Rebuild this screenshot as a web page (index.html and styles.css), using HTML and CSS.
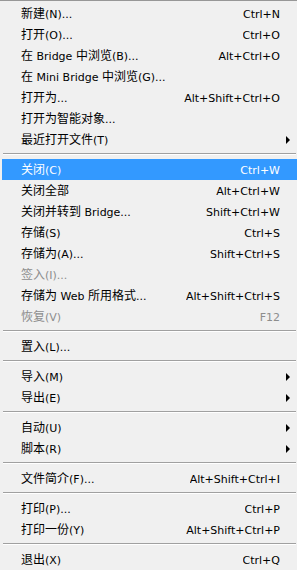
FILE: index.html
```html
<!DOCTYPE html>
<html>
<head>
<meta charset="utf-8">
<link rel="stylesheet" href="styles.css">
</head>
<body>
<div class="menu">
  <div class="item"><span class="label"><span class="z">新建</span>(N)...</span><span class="key">Ctrl+N</span><span class="sub"></span></div>
  <div class="item"><span class="label"><span class="z">打开</span>(O)...</span><span class="key">Ctrl+O</span><span class="sub"></span></div>
  <div class="item"><span class="label"><span class="z">在</span> Bridge <span class="z">中浏览</span>(B)...</span><span class="key">Alt+Ctrl+O</span><span class="sub"></span></div>
  <div class="item"><span class="label"><span class="z">在</span> Mini Bridge <span class="z">中浏览</span>(G)...</span><span class="key"></span><span class="sub"></span></div>
  <div class="item"><span class="label"><span class="z">打开为</span>...</span><span class="key">Alt+Shift+Ctrl+O</span><span class="sub"></span></div>
  <div class="item"><span class="label"><span class="z">打开为智能对象</span>...</span><span class="key"></span><span class="sub"></span></div>
  <div class="item"><span class="label"><span class="z">最近打开文件</span>(T)</span><span class="key"></span><span class="sub"><i class="arrow"></i></span></div>
  <div class="sep"></div>
  <div class="item active"><span class="label"><span class="z">关闭</span>(C)</span><span class="key">Ctrl+W</span><span class="sub"></span></div>
  <div class="item"><span class="label"><span class="z">关闭全部</span></span><span class="key">Alt+Ctrl+W</span><span class="sub"></span></div>
  <div class="item"><span class="label"><span class="z">关闭并转到</span> Bridge...</span><span class="key">Shift+Ctrl+W</span><span class="sub"></span></div>
  <div class="item"><span class="label"><span class="z">存储</span>(S)</span><span class="key">Ctrl+S</span><span class="sub"></span></div>
  <div class="item"><span class="label"><span class="z">存储为</span>(A)...</span><span class="key">Shift+Ctrl+S</span><span class="sub"></span></div>
  <div class="item disabled"><span class="label"><span class="z">签入</span>(I)...</span><span class="key"></span><span class="sub"></span></div>
  <div class="item"><span class="label"><span class="z">存储为</span> Web <span class="z">所用格式</span>...</span><span class="key">Alt+Shift+Ctrl+S</span><span class="sub"></span></div>
  <div class="item disabled"><span class="label"><span class="z">恢复</span>(V)</span><span class="key">F12</span><span class="sub"></span></div>
  <div class="sep"></div>
  <div class="item"><span class="label"><span class="z">置入</span>(L)...</span><span class="key"></span><span class="sub"></span></div>
  <div class="sep"></div>
  <div class="item"><span class="label"><span class="z">导入</span>(M)</span><span class="key"></span><span class="sub"><i class="arrow"></i></span></div>
  <div class="item"><span class="label"><span class="z">导出</span>(E)</span><span class="key"></span><span class="sub"><i class="arrow"></i></span></div>
  <div class="sep"></div>
  <div class="item"><span class="label"><span class="z">自动</span>(U)</span><span class="key"></span><span class="sub"><i class="arrow"></i></span></div>
  <div class="item"><span class="label"><span class="z">脚本</span>(R)</span><span class="key"></span><span class="sub"><i class="arrow"></i></span></div>
  <div class="sep"></div>
  <div class="item"><span class="label"><span class="z">文件简介</span>(F)...</span><span class="key">Alt+Shift+Ctrl+I</span><span class="sub"></span></div>
  <div class="sep"></div>
  <div class="item"><span class="label"><span class="z">打印</span>(P)...</span><span class="key">Ctrl+P</span><span class="sub"></span></div>
  <div class="item"><span class="label"><span class="z">打印一份</span>(Y)</span><span class="key">Alt+Shift+Ctrl+P</span><span class="sub"></span></div>
  <div class="sep"></div>
  <div class="item"><span class="label"><span class="z">退出</span>(X)</span><span class="key">Ctrl+Q</span><span class="sub"></span></div>
</div>
</body>
</html>
```

FILE: styles.css
```css
html, body {
  margin: 0;
  padding: 0;
  background: #f0f0f0;
}
.menu {
  width: 297px;
  height: 570px;
  box-sizing: border-box;
  border-top: 1px solid #979797;
  padding: 2px 0 0 2px;
  background: #f0f0f0;
  font-family: "DejaVu Sans", "Noto Sans CJK SC", sans-serif;
  font-size: 11px;
  color: #000;
  overflow: hidden;
}
.item {
  display: grid;
  grid-template-columns: 1fr auto 17px;
  height: 21px;
  line-height: 21px;
  padding-left: 19px;
  white-space: nowrap;
}
.item .label, .item .key {
  padding-top: 1px;
  height: 20px;
  overflow: hidden;
}
.z {
  font-family: "Noto Sans CJK SC", sans-serif;
  font-size: 12px;
  line-height: 1;
}
.item.active {
  background: #3399ff;
  color: #fff;
}
.item.disabled {
  color: #8d8d8d;
}
.sub {
  display: flex;
  align-items: center;
}
.arrow {
  display: block;
  width: 0;
  height: 0;
  margin-left: 6px;
  border-top: 4px solid transparent;
  border-bottom: 4px solid transparent;
  border-left: 4px solid #000;
}
.sep {
  height: 0;
  border-top: 1px solid #a0a0a0;
  border-bottom: 1px solid #ffffff;
  margin: 3px 1px 4px 1px;
}
```
